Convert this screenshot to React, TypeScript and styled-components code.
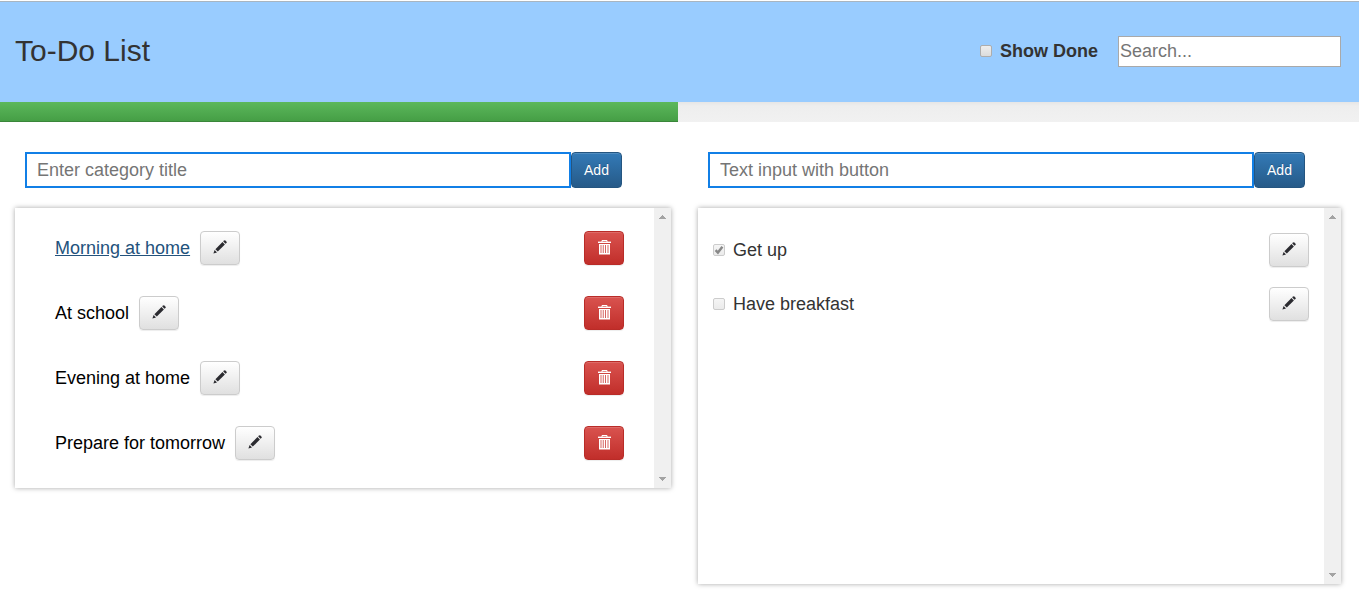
import React, { useId, useState } from "react";
import styled, { createGlobalStyle } from "styled-components";

const GlobalStyle = createGlobalStyle`
  *, *::before, *::after { box-sizing: border-box; }
  body {
    margin: 0;
    background: #fff;
    color: #333;
    font-family: "Liberation Sans", Arial, Helvetica, sans-serif;
    font-size: 18px;
    line-height: 26px;
  }
  button, input { font-family: inherit; }
`;

const Page = styled.div`
  padding-top: 1px;
`;

const Header = styled.header`
  display: flex;
  align-items: center;
  justify-content: space-between;
  height: 101px;
  padding: 0 18px 2px 15px;
  border-top: 1px solid #a9b5c0;
  background: #99ccff;
`;

const Title = styled.h1`
  margin: 0;
  font-size: 30px;
  line-height: 34px;
  font-weight: 400;
`;

const Filters = styled.div`
  display: flex;
  align-items: center;
  gap: 20px;
`;

const CheckLabel = styled.label<{ $bold?: boolean }>`
  display: flex;
  align-items: center;
  gap: 8px;
  font-weight: ${(p) => (p.$bold ? 700 : 400)};
`;

const BoxWrap = styled.span`
  position: relative;
  display: flex;
  width: 12px;
  height: 12px;
`;

const Box = styled.input<{ $soft?: boolean }>`
  appearance: none;
  width: 12px;
  height: 12px;
  margin: 0;
  border: 1px solid ${(p) => (p.$soft ? "#ccc" : "#adadad")};
  border-radius: 2px;
  background: ${(p) =>
    p.$soft
      ? "linear-gradient(#f5f5f5, #ebebeb)"
      : "linear-gradient(#eee, #dcdcdc)"};
`;

const Tick = styled.svg`
  position: absolute;
  inset: 0;
  pointer-events: none;
`;

const SearchInput = styled.input`
  width: 223px;
  height: 31px;
  padding: 1px;
  border: 1px solid #a9a9a9;
  background: #fff;
  color: #333;
  font-size: 18px;
  &::placeholder { color: #757575; opacity: 1; }
`;

const Progress = styled.div`
  height: 20px;
  background: linear-gradient(#e6e6e6, #eee 4px, #f1f1f1);
`;

const ProgressFill = styled.div`
  height: 100%;
  background: linear-gradient(#5cb85c, #449d44);
  box-shadow: inset 0 -1px 0 rgba(0, 0, 0, 0.15);
`;

const Columns = styled.main`
  display: flex;
  align-items: flex-start;
  gap: 27px;
  padding: 30px 18px 24px 15px;
`;

const Column = styled.section<{ $grow: number }>`
  flex: ${(p) => p.$grow} 1 0;
  min-width: 0;
`;

const AddForm = styled.form<{ $end: number }>`
  display: flex;
  margin: 0 ${(p) => p.$end}px 20px 10px;
`;

const AddInput = styled.input`
  flex: 1;
  min-width: 0;
  height: 36px;
  padding: 0 10px;
  border: 2px solid #117fe6;
  background: #fff;
  color: #333;
  font-size: 18px;
  &::placeholder { color: #757575; opacity: 1; }
`;

const AddButton = styled.button`
  width: 51px;
  height: 36px;
  padding: 0;
  border: 1px solid #245580;
  border-radius: 4px;
  background: linear-gradient(#337ab7, #265a88);
  box-shadow: inset 0 1px 0 rgba(255, 255, 255, 0.15);
  color: #fff;
  font-size: 14px;
  text-shadow: 0 -1px 0 rgba(0, 0, 0, 0.2);
`;

const Panel = styled.div<{ $min?: number }>`
  display: flex;
  min-height: ${(p) => p.$min ?? 0}px;
  background: #fff;
  box-shadow: 0 0 5px rgba(0, 0, 0, 0.35);
`;

const CategoryList = styled.ul`
  display: flex;
  flex: 1;
  flex-direction: column;
  gap: 31px;
  margin: 0;
  padding: 23px 30px 28px 40px;
  list-style: none;
`;

const TaskList = styled.ul`
  display: flex;
  flex: 1;
  flex-direction: column;
  gap: 20px;
  margin: 0;
  padding: 25px 15px;
  list-style: none;
`;

const Row = styled.li`
  display: flex;
  align-items: center;
  justify-content: space-between;
`;

const CategoryName = styled.div`
  display: flex;
  align-items: center;
  gap: 10px;
`;

const CategoryLink = styled.a<{ $active: boolean }>`
  color: ${(p) => (p.$active ? "#23527c" : "#000")};
  text-decoration: ${(p) => (p.$active ? "underline" : "none")};
`;

const IconButton = styled.button<{ $danger?: boolean }>`
  display: flex;
  align-items: center;
  justify-content: center;
  width: 40px;
  height: 34px;
  padding: 0 0 2px;
  border: 1px solid ${(p) => (p.$danger ? "#b92c28" : "#ccc")};
  border-radius: 4px;
  background: ${(p) =>
    p.$danger
      ? "linear-gradient(#d9534f, #c12e2a)"
      : "linear-gradient(#fff, #e0e0e0)"};
  box-shadow: inset 0 1px 0 rgba(255, 255, 255, 0.15),
    0 1px 1px rgba(0, 0, 0, 0.075);
  color: ${(p) => (p.$danger ? "#fff" : "#333")};
`;

const Scrollbar = styled.div`
  display: flex;
  flex-direction: column;
  align-items: center;
  justify-content: space-between;
  width: 17px;
  padding: 7px 0;
  background: #f0f0f0;
`;

const PencilIcon = () => (
  <svg width="14" height="14" viewBox="0 0 14 14" fill="#2b2b30" aria-hidden="true">
    <path d="M11.2 0.4Q11.7 0 12.2 0.4L13.6 1.8Q14 2.3 13.6 2.8L12.6 3.8L10.2 1.4Z" />
    <path d="M9.5 2.1L11.9 4.5L4.8 11.6L2.4 9.2Z" />
    <path d="M1.6 10L4 12.4L0.4 13.6Z" />
  </svg>
);

const TrashIcon = () => (
  <svg width="14" height="16" viewBox="0 0 14 16" aria-hidden="true">
    <path d="M5 3V1.5H10V3" fill="none" stroke="currentColor" />
    <path d="M1 2.6H14V4H1Z" fill="currentColor" />
    <path
      fill="currentColor"
      fillRule="evenodd"
      d="M2 5H13V15.4H2ZM3.6 6V14H4.4V6ZM5.8 6V14H6.6V6ZM8.2 6V14H9V6ZM10.6 6V14H11.4V6Z"
    />
  </svg>
);

const ScrollTrack = () => (
  <Scrollbar aria-hidden="true">
    <svg width="7" height="4" viewBox="0 0 7 4" shapeRendering="crispEdges">
      <path d="M0 4L3.5 0L7 4Z" fill="#a3a3a3" />
    </svg>
    <svg width="7" height="4" viewBox="0 0 7 4" shapeRendering="crispEdges">
      <path d="M0 0L3.5 4L7 0Z" fill="#a3a3a3" />
    </svg>
  </Scrollbar>
);

type CheckProps = {
  label: string;
  bold?: boolean;
  soft?: boolean;
  initial?: boolean;
};

function Check({ label, bold, soft, initial = false }: CheckProps) {
  const id = useId();
  const [checked, setChecked] = useState(initial);
  return (
    <CheckLabel htmlFor={id} $bold={bold}>
      <BoxWrap>
        <Box
          id={id}
          type="checkbox"
          $soft={soft}
          checked={checked}
          onChange={(e) => setChecked(e.target.checked)}
        />
        {checked && (
          <Tick width="12" height="12" viewBox="0 0 12 12" aria-hidden="true">
            <path d="M2.6 6.2L4.9 8.6L9.4 2.8" fill="none" stroke="#888" strokeWidth="2.4" />
          </Tick>
        )}
      </BoxWrap>
      {label}
    </CheckLabel>
  );
}

function AddBar({ placeholder, end }: { placeholder: string; end: number }) {
  return (
    <AddForm $end={end} onSubmit={(e) => e.preventDefault()}>
      <AddInput type="text" placeholder={placeholder} aria-label={placeholder} />
      <AddButton type="submit">Add</AddButton>
    </AddForm>
  );
}

const categories = ["Morning at home", "At school", "Evening at home", "Prepare for tomorrow"];
const tasks = [
  { title: "Get up", done: true },
  { title: "Have breakfast", done: false },
];
const progress = 49.9;

export default function App() {
  const [active, setActive] = useState(categories[0]);
  return (
    <Page>
      <GlobalStyle />
      <Header>
        <Title>To-Do List</Title>
        <Filters>
          <Check label="Show Done" bold />
          <SearchInput type="text" placeholder="Search..." aria-label="Search" />
        </Filters>
      </Header>
      <Progress role="progressbar" aria-valuenow={progress} aria-label="Tasks done">
        <ProgressFill style={{ width: `${progress}%` }} />
      </Progress>
      <Columns>
        <Column $grow={656}>
          <AddBar placeholder="Enter category title" end={49} />
          <Panel>
            <CategoryList>
              {categories.map((name) => (
                <Row key={name}>
                  <CategoryName>
                    <CategoryLink
                      href="#"
                      $active={name === active}
                      onClick={(e) => {
                        e.preventDefault();
                        setActive(name);
                      }}
                    >
                      {name}
                    </CategoryLink>
                    <IconButton type="button" aria-label={`Edit ${name}`}>
                      <PencilIcon />
                    </IconButton>
                  </CategoryName>
                  <IconButton type="button" $danger aria-label={`Delete ${name}`}>
                    <TrashIcon />
                  </IconButton>
                </Row>
              ))}
            </CategoryList>
            <ScrollTrack />
          </Panel>
        </Column>
        <Column $grow={643}>
          <AddBar placeholder="Text input with button" end={36} />
          <Panel $min={376}>
            <TaskList>
              {tasks.map((task) => (
                <Row key={task.title}>
                  <Check label={task.title} soft initial={task.done} />
                  <IconButton type="button" aria-label={`Edit ${task.title}`}>
                    <PencilIcon />
                  </IconButton>
                </Row>
              ))}
            </TaskList>
            <ScrollTrack />
          </Panel>
        </Column>
      </Columns>
    </Page>
  );
}
